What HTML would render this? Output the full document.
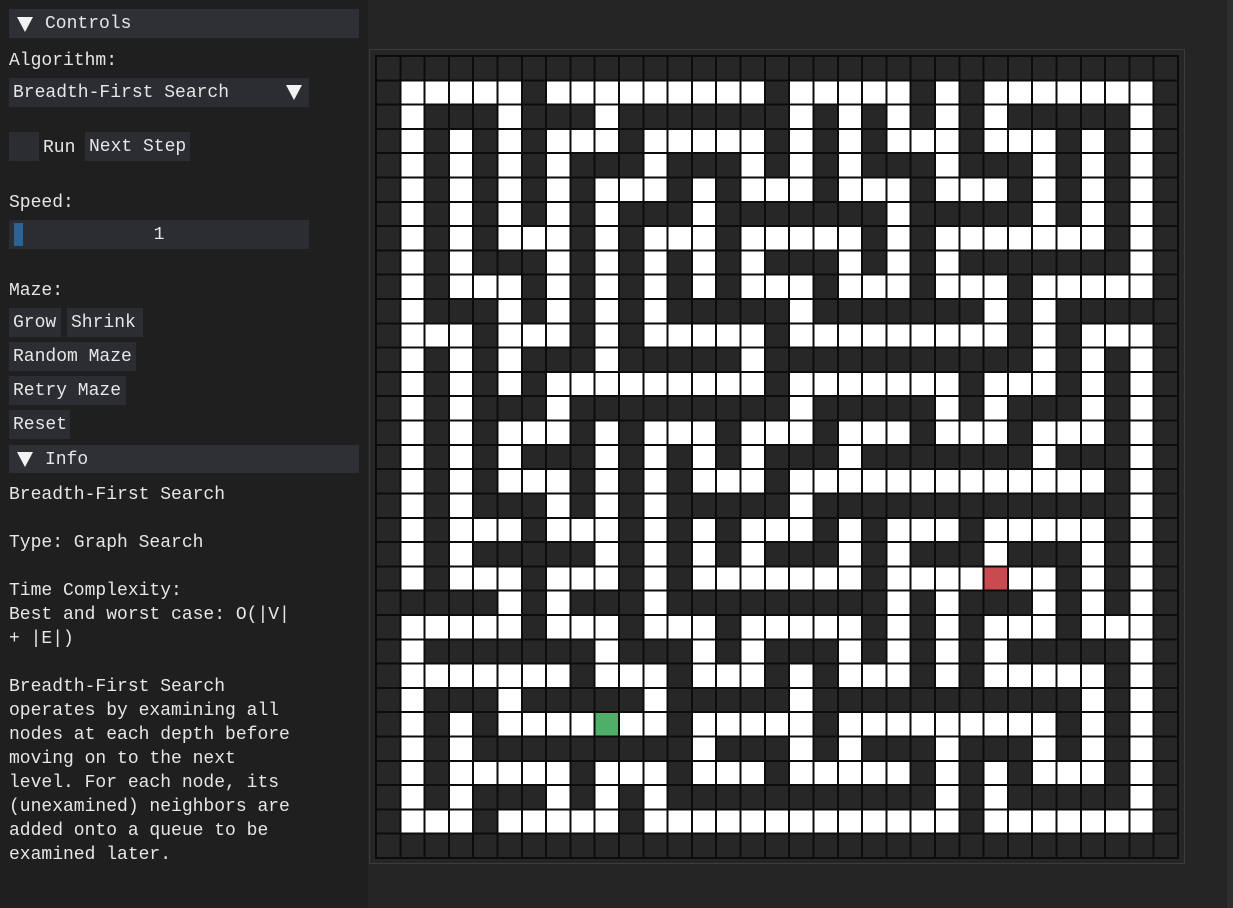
<!DOCTYPE html>
<html><head><meta charset="utf-8">
<style>
*{margin:0;padding:0;box-sizing:border-box}
html,body{width:1233px;height:908px;overflow:hidden;background:#252525;font-family:"Liberation Mono",monospace;color:#e6e6e6}
.panel{position:absolute;left:0;top:0;width:368px;height:908px;background:#1f1f1f}
.rs{position:absolute;right:0;top:0;width:6px;height:908px;background:#2e2e2e}
.hdr{position:absolute;left:9px;width:350px;height:29px;background:#2f3036;font-size:18px;line-height:31px}
.tri{position:absolute;left:8px;top:8px;width:0;height:0;border-left:8px solid transparent;border-right:8px solid transparent;border-top:15px solid #f2f2f2}
.hdr span{position:absolute;left:36px}
.t{position:absolute;left:9px;font-size:18px;line-height:24px;white-space:pre;padding-top:2px}
.btn{position:absolute;height:29px;background:#2c2d32;font-size:18px;line-height:31px;padding-left:4px;white-space:pre}
.frame{position:absolute;left:369px;top:49px;width:816px;height:815px;border:1px solid #3c3c3c;background:#262626}
#g{position:absolute;left:376px;top:56px;width:802px;height:802px}
#gl{position:absolute;left:375px;top:55px;width:804px;height:804px;
background-image:repeating-linear-gradient(90deg,#0c0c0c 0,#0c0c0c 2px,transparent 2px,transparent 24.303px),repeating-linear-gradient(180deg,#0c0c0c 0,#0c0c0c 2px,transparent 2px,transparent 24.303px)}
</style></head><body>
<div class="panel"></div>
<div class="rs"></div>
<div class="hdr" style="top:9px"><div class="tri"></div><span>Controls</span></div>
<div class="t" style="top:47px">Algorithm:</div>
<div class="btn" style="left:9px;top:78px;width:300px">Breadth-First Search<div class="tri" style="left:277px;top:7px"></div></div>
<div class="btn" style="left:9px;top:132px;width:30px"></div>
<div class="t" style="left:43px;top:134px">Run</div>
<div class="btn" style="left:85px;top:132px;width:105px">Next Step</div>
<div class="t" style="top:189px">Speed:</div>
<div class="btn" style="left:9px;top:220px;width:300px;padding:0;text-align:center">1<div style="position:absolute;left:5px;top:3px;width:9px;height:23px;background:#2a6396"></div></div>
<div class="t" style="top:277px">Maze:</div>
<div class="btn" style="left:9px;top:308px;width:52px">Grow</div>
<div class="btn" style="left:67px;top:308px;width:76px">Shrink</div>
<div class="btn" style="left:9px;top:342px;width:127px">Random Maze</div>
<div class="btn" style="left:9px;top:376px;width:117px">Retry Maze</div>
<div class="btn" style="left:9px;top:410px;width:61px">Reset</div>
<div class="hdr" style="top:445px;height:28px"><div class="tri" style="top:7px"></div><span>Info</span></div>
<div class="t" style="top:481px">Breadth-First Search</div>
<div class="t" style="top:529px">Type: Graph Search</div>
<div class="t" style="top:577px">Time Complexity:
Best and worst case: O(|V|
+ |E|)</div>
<div class="t" style="top:673px">Breadth-First Search
operates by examining all
nodes at each depth before
moving on to the next
level. For each node, its
(unexamined) neighbors are
added onto a queue to be
examined later.</div>
<div class="frame"></div>
<svg id="g" viewBox="0 0 33 33" preserveAspectRatio="none" xmlns="http://www.w3.org/2000/svg">
<rect x="0" y="0" width="33" height="33" fill="#272727"/>
<g fill="#fff">
<rect x="1" y="1" width="5" height="1"/><rect x="7" y="1" width="9" height="1"/><rect x="17" y="1" width="5" height="1"/><rect x="23" y="1" width="1" height="1"/><rect x="25" y="1" width="7" height="1"/>
<rect x="1" y="2" width="1" height="1"/><rect x="5" y="2" width="1" height="1"/><rect x="9" y="2" width="1" height="1"/><rect x="17" y="2" width="1" height="1"/><rect x="19" y="2" width="1" height="1"/><rect x="21" y="2" width="1" height="1"/><rect x="23" y="2" width="1" height="1"/><rect x="25" y="2" width="1" height="1"/><rect x="31" y="2" width="1" height="1"/>
<rect x="1" y="3" width="1" height="1"/><rect x="3" y="3" width="1" height="1"/><rect x="5" y="3" width="1" height="1"/><rect x="7" y="3" width="3" height="1"/><rect x="11" y="3" width="5" height="1"/><rect x="17" y="3" width="1" height="1"/><rect x="19" y="3" width="1" height="1"/><rect x="21" y="3" width="3" height="1"/><rect x="25" y="3" width="3" height="1"/><rect x="29" y="3" width="1" height="1"/><rect x="31" y="3" width="1" height="1"/>
<rect x="1" y="4" width="1" height="1"/><rect x="3" y="4" width="1" height="1"/><rect x="5" y="4" width="1" height="1"/><rect x="7" y="4" width="1" height="1"/><rect x="11" y="4" width="1" height="1"/><rect x="15" y="4" width="1" height="1"/><rect x="17" y="4" width="1" height="1"/><rect x="19" y="4" width="1" height="1"/><rect x="23" y="4" width="1" height="1"/><rect x="27" y="4" width="1" height="1"/><rect x="29" y="4" width="1" height="1"/><rect x="31" y="4" width="1" height="1"/>
<rect x="1" y="5" width="1" height="1"/><rect x="3" y="5" width="1" height="1"/><rect x="5" y="5" width="1" height="1"/><rect x="7" y="5" width="1" height="1"/><rect x="9" y="5" width="3" height="1"/><rect x="13" y="5" width="1" height="1"/><rect x="15" y="5" width="3" height="1"/><rect x="19" y="5" width="3" height="1"/><rect x="23" y="5" width="3" height="1"/><rect x="27" y="5" width="1" height="1"/><rect x="29" y="5" width="1" height="1"/><rect x="31" y="5" width="1" height="1"/>
<rect x="1" y="6" width="1" height="1"/><rect x="3" y="6" width="1" height="1"/><rect x="5" y="6" width="1" height="1"/><rect x="7" y="6" width="1" height="1"/><rect x="9" y="6" width="1" height="1"/><rect x="13" y="6" width="1" height="1"/><rect x="21" y="6" width="1" height="1"/><rect x="27" y="6" width="1" height="1"/><rect x="29" y="6" width="1" height="1"/><rect x="31" y="6" width="1" height="1"/>
<rect x="1" y="7" width="1" height="1"/><rect x="3" y="7" width="1" height="1"/><rect x="5" y="7" width="3" height="1"/><rect x="9" y="7" width="1" height="1"/><rect x="11" y="7" width="3" height="1"/><rect x="15" y="7" width="5" height="1"/><rect x="21" y="7" width="1" height="1"/><rect x="23" y="7" width="7" height="1"/><rect x="31" y="7" width="1" height="1"/>
<rect x="1" y="8" width="1" height="1"/><rect x="3" y="8" width="1" height="1"/><rect x="7" y="8" width="1" height="1"/><rect x="9" y="8" width="1" height="1"/><rect x="11" y="8" width="1" height="1"/><rect x="13" y="8" width="1" height="1"/><rect x="15" y="8" width="1" height="1"/><rect x="19" y="8" width="1" height="1"/><rect x="21" y="8" width="1" height="1"/><rect x="23" y="8" width="1" height="1"/><rect x="31" y="8" width="1" height="1"/>
<rect x="1" y="9" width="1" height="1"/><rect x="3" y="9" width="3" height="1"/><rect x="7" y="9" width="1" height="1"/><rect x="9" y="9" width="1" height="1"/><rect x="11" y="9" width="1" height="1"/><rect x="13" y="9" width="1" height="1"/><rect x="15" y="9" width="3" height="1"/><rect x="19" y="9" width="3" height="1"/><rect x="23" y="9" width="3" height="1"/><rect x="27" y="9" width="5" height="1"/>
<rect x="1" y="10" width="1" height="1"/><rect x="5" y="10" width="1" height="1"/><rect x="7" y="10" width="1" height="1"/><rect x="9" y="10" width="1" height="1"/><rect x="11" y="10" width="1" height="1"/><rect x="17" y="10" width="1" height="1"/><rect x="25" y="10" width="1" height="1"/><rect x="27" y="10" width="1" height="1"/>
<rect x="1" y="11" width="3" height="1"/><rect x="5" y="11" width="3" height="1"/><rect x="9" y="11" width="1" height="1"/><rect x="11" y="11" width="5" height="1"/><rect x="17" y="11" width="9" height="1"/><rect x="27" y="11" width="1" height="1"/><rect x="29" y="11" width="3" height="1"/>
<rect x="1" y="12" width="1" height="1"/><rect x="3" y="12" width="1" height="1"/><rect x="5" y="12" width="1" height="1"/><rect x="9" y="12" width="1" height="1"/><rect x="15" y="12" width="1" height="1"/><rect x="27" y="12" width="1" height="1"/><rect x="29" y="12" width="1" height="1"/><rect x="31" y="12" width="1" height="1"/>
<rect x="1" y="13" width="1" height="1"/><rect x="3" y="13" width="1" height="1"/><rect x="5" y="13" width="1" height="1"/><rect x="7" y="13" width="9" height="1"/><rect x="17" y="13" width="7" height="1"/><rect x="25" y="13" width="3" height="1"/><rect x="29" y="13" width="1" height="1"/><rect x="31" y="13" width="1" height="1"/>
<rect x="1" y="14" width="1" height="1"/><rect x="3" y="14" width="1" height="1"/><rect x="7" y="14" width="1" height="1"/><rect x="17" y="14" width="1" height="1"/><rect x="23" y="14" width="1" height="1"/><rect x="25" y="14" width="1" height="1"/><rect x="29" y="14" width="1" height="1"/><rect x="31" y="14" width="1" height="1"/>
<rect x="1" y="15" width="1" height="1"/><rect x="3" y="15" width="1" height="1"/><rect x="5" y="15" width="3" height="1"/><rect x="9" y="15" width="1" height="1"/><rect x="11" y="15" width="3" height="1"/><rect x="15" y="15" width="3" height="1"/><rect x="19" y="15" width="3" height="1"/><rect x="23" y="15" width="3" height="1"/><rect x="27" y="15" width="3" height="1"/><rect x="31" y="15" width="1" height="1"/>
<rect x="1" y="16" width="1" height="1"/><rect x="3" y="16" width="1" height="1"/><rect x="5" y="16" width="1" height="1"/><rect x="9" y="16" width="1" height="1"/><rect x="11" y="16" width="1" height="1"/><rect x="13" y="16" width="1" height="1"/><rect x="15" y="16" width="1" height="1"/><rect x="19" y="16" width="1" height="1"/><rect x="27" y="16" width="1" height="1"/><rect x="31" y="16" width="1" height="1"/>
<rect x="1" y="17" width="1" height="1"/><rect x="3" y="17" width="1" height="1"/><rect x="5" y="17" width="3" height="1"/><rect x="9" y="17" width="1" height="1"/><rect x="11" y="17" width="1" height="1"/><rect x="13" y="17" width="3" height="1"/><rect x="17" y="17" width="13" height="1"/><rect x="31" y="17" width="1" height="1"/>
<rect x="1" y="18" width="1" height="1"/><rect x="3" y="18" width="1" height="1"/><rect x="7" y="18" width="1" height="1"/><rect x="9" y="18" width="1" height="1"/><rect x="11" y="18" width="1" height="1"/><rect x="17" y="18" width="1" height="1"/><rect x="31" y="18" width="1" height="1"/>
<rect x="1" y="19" width="1" height="1"/><rect x="3" y="19" width="3" height="1"/><rect x="7" y="19" width="3" height="1"/><rect x="11" y="19" width="1" height="1"/><rect x="13" y="19" width="1" height="1"/><rect x="15" y="19" width="3" height="1"/><rect x="19" y="19" width="1" height="1"/><rect x="21" y="19" width="3" height="1"/><rect x="25" y="19" width="5" height="1"/><rect x="31" y="19" width="1" height="1"/>
<rect x="1" y="20" width="1" height="1"/><rect x="3" y="20" width="1" height="1"/><rect x="9" y="20" width="1" height="1"/><rect x="11" y="20" width="1" height="1"/><rect x="13" y="20" width="1" height="1"/><rect x="15" y="20" width="1" height="1"/><rect x="19" y="20" width="1" height="1"/><rect x="21" y="20" width="1" height="1"/><rect x="25" y="20" width="1" height="1"/><rect x="29" y="20" width="1" height="1"/><rect x="31" y="20" width="1" height="1"/>
<rect x="1" y="21" width="1" height="1"/><rect x="3" y="21" width="3" height="1"/><rect x="7" y="21" width="3" height="1"/><rect x="11" y="21" width="1" height="1"/><rect x="13" y="21" width="7" height="1"/><rect x="21" y="21" width="7" height="1"/><rect x="29" y="21" width="1" height="1"/><rect x="31" y="21" width="1" height="1"/>
<rect x="5" y="22" width="1" height="1"/><rect x="7" y="22" width="1" height="1"/><rect x="11" y="22" width="1" height="1"/><rect x="21" y="22" width="1" height="1"/><rect x="23" y="22" width="1" height="1"/><rect x="27" y="22" width="1" height="1"/><rect x="29" y="22" width="1" height="1"/><rect x="31" y="22" width="1" height="1"/>
<rect x="1" y="23" width="5" height="1"/><rect x="7" y="23" width="3" height="1"/><rect x="11" y="23" width="3" height="1"/><rect x="15" y="23" width="5" height="1"/><rect x="21" y="23" width="1" height="1"/><rect x="23" y="23" width="1" height="1"/><rect x="25" y="23" width="3" height="1"/><rect x="29" y="23" width="3" height="1"/>
<rect x="1" y="24" width="1" height="1"/><rect x="9" y="24" width="1" height="1"/><rect x="13" y="24" width="1" height="1"/><rect x="15" y="24" width="1" height="1"/><rect x="19" y="24" width="1" height="1"/><rect x="21" y="24" width="1" height="1"/><rect x="23" y="24" width="1" height="1"/><rect x="25" y="24" width="1" height="1"/><rect x="31" y="24" width="1" height="1"/>
<rect x="1" y="25" width="7" height="1"/><rect x="9" y="25" width="3" height="1"/><rect x="13" y="25" width="3" height="1"/><rect x="17" y="25" width="1" height="1"/><rect x="19" y="25" width="3" height="1"/><rect x="23" y="25" width="1" height="1"/><rect x="25" y="25" width="5" height="1"/><rect x="31" y="25" width="1" height="1"/>
<rect x="1" y="26" width="1" height="1"/><rect x="5" y="26" width="1" height="1"/><rect x="11" y="26" width="1" height="1"/><rect x="17" y="26" width="1" height="1"/><rect x="29" y="26" width="1" height="1"/><rect x="31" y="26" width="1" height="1"/>
<rect x="1" y="27" width="1" height="1"/><rect x="3" y="27" width="1" height="1"/><rect x="5" y="27" width="7" height="1"/><rect x="13" y="27" width="5" height="1"/><rect x="19" y="27" width="9" height="1"/><rect x="29" y="27" width="1" height="1"/><rect x="31" y="27" width="1" height="1"/>
<rect x="1" y="28" width="1" height="1"/><rect x="3" y="28" width="1" height="1"/><rect x="13" y="28" width="1" height="1"/><rect x="17" y="28" width="1" height="1"/><rect x="19" y="28" width="1" height="1"/><rect x="23" y="28" width="1" height="1"/><rect x="27" y="28" width="1" height="1"/><rect x="29" y="28" width="1" height="1"/><rect x="31" y="28" width="1" height="1"/>
<rect x="1" y="29" width="1" height="1"/><rect x="3" y="29" width="5" height="1"/><rect x="9" y="29" width="3" height="1"/><rect x="13" y="29" width="3" height="1"/><rect x="17" y="29" width="5" height="1"/><rect x="23" y="29" width="1" height="1"/><rect x="25" y="29" width="1" height="1"/><rect x="27" y="29" width="3" height="1"/><rect x="31" y="29" width="1" height="1"/>
<rect x="1" y="30" width="1" height="1"/><rect x="3" y="30" width="1" height="1"/><rect x="7" y="30" width="1" height="1"/><rect x="9" y="30" width="1" height="1"/><rect x="11" y="30" width="1" height="1"/><rect x="23" y="30" width="1" height="1"/><rect x="25" y="30" width="1" height="1"/><rect x="31" y="30" width="1" height="1"/>
<rect x="1" y="31" width="3" height="1"/><rect x="5" y="31" width="5" height="1"/><rect x="11" y="31" width="13" height="1"/><rect x="25" y="31" width="7" height="1"/>
</g>
<rect x="9" y="27" width="1" height="1" fill="#4fae68"/>
<rect x="25" y="21" width="1" height="1" fill="#c94a4f"/>
</svg>
<div id="gl"></div>
</body></html>
